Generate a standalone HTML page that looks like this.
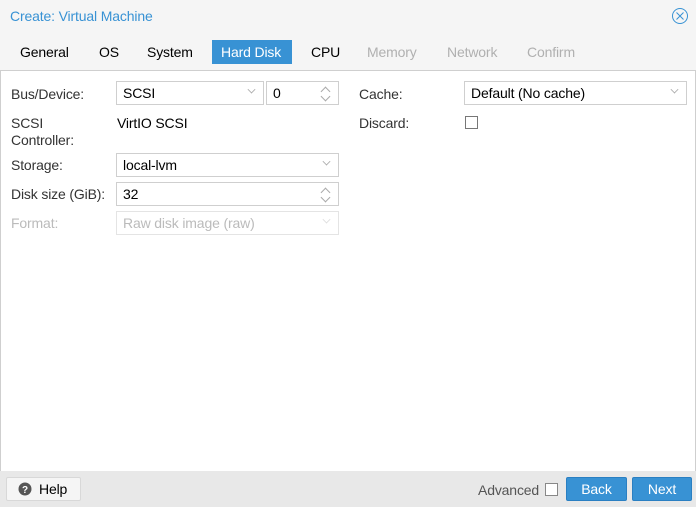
<!DOCTYPE html>
<html><head><style>
*{box-sizing:border-box;margin:0;padding:0}
body{width:696px;height:507px;background:#f5f5f5;font-family:"Liberation Sans",sans-serif;font-size:14px;color:#000;position:relative;overflow:hidden;letter-spacing:-0.15px}
.a{position:absolute;white-space:nowrap}
.title{left:10px;top:8px;color:#3892d4}
.tab{top:40px;height:24px;line-height:24px;padding:0 9px}
.dis{color:#b0b0b0}
.body{left:0;top:70px;width:696px;height:401px;background:#fff;border:1px solid #cfcfcf;border-bottom:none}
.lbl{color:#333}
.f{height:24px;border:1px solid #cfcfcf;background:#fff;line-height:22px;padding-left:6px}
.arr{position:absolute;right:8px;top:7px;width:7px;height:7px;border-right:1px solid #aaa;border-bottom:1px solid #aaa;transform:rotate(45deg) scale(.8);top:4px}
.spin:before,.spin:after{content:"";position:absolute;right:9px;width:6px;height:6px;border-left:1px solid #aaa;border-top:1px solid #aaa}
.spin:before{top:6px;transform:rotate(45deg)}
.spin:after{top:11px;transform:rotate(225deg)}
.cb{width:13px;height:13px;border:1px solid #777;background:#fff}
.foot{left:0;top:471px;width:696px;height:36px;background:#e8e8e8}
.btn{top:477px;height:24px;line-height:22px;border-radius:2px;text-align:center}
.blue{background:#3892d4;border:1px solid #2a7fc2;color:#fff}
</style></head><body>
<div class="a title">Create: Virtual Machine</div>
<svg class="a" style="left:671px;top:7px" width="18" height="18" viewBox="0 0 18 18"><circle cx="9" cy="9" r="7.5" fill="none" stroke="#3892d4" stroke-width="1"/><path d="M5.5 5.5L12.5 12.5M12.5 5.5L5.5 12.5" stroke="#3892d4" stroke-width="1"/></svg>
<div class="a tab" style="left:11px">General</div>
<div class="a tab" style="left:90px">OS</div>
<div class="a tab" style="left:138px">System</div>
<div class="a tab" style="left:212px;width:80px;background:#3892d4;color:#fff">Hard Disk</div>
<div class="a tab" style="left:302px">CPU</div>
<div class="a tab dis" style="left:358px">Memory</div>
<div class="a tab dis" style="left:438px">Network</div>
<div class="a tab dis" style="left:518px">Confirm</div>
<div class="a body"></div>
<div class="a lbl" style="left:11px;top:86px">Bus/Device:</div>
<div class="a f" style="left:116px;top:81px;width:148px">SCSI<span class="arr"></span></div>
<div class="a f spin" style="left:266px;top:81px;width:73px">0</div>
<div class="a lbl" style="left:11px;top:115px;line-height:17px">SCSI<br>Controller:</div>
<div class="a" style="left:117px;top:115px">VirtIO SCSI</div>
<div class="a lbl" style="left:11px;top:157px">Storage:</div>
<div class="a f" style="left:116px;top:153px;width:223px">local-lvm<span class="arr"></span></div>
<div class="a lbl" style="left:11px;top:186px">Disk size (GiB):</div>
<div class="a f spin" style="left:116px;top:182px;width:223px">32</div>
<div class="a dis" style="left:11px;top:215px;color:#bbb">Format:</div>
<div class="a f" style="left:116px;top:211px;width:223px;color:#bbb;border-color:#e4e4e4">Raw disk image (raw)<span class="arr" style="border-color:#ddd"></span></div>
<div class="a lbl" style="left:359px;top:86px">Cache:</div>
<div class="a f" style="left:464px;top:81px;width:223px">Default (No cache)<span class="arr"></span></div>
<div class="a lbl" style="left:359px;top:115px">Discard:</div>
<div class="a cb" style="left:465px;top:116px"></div>
<div class="a foot"></div>
<div class="a btn" style="left:6px;top:477px;width:75px;background:#f5f5f5;border:1px solid #d8d8d8;text-align:left;padding-left:32px">Help</div>
<svg class="a" style="left:18px;top:482px" width="14" height="14" viewBox="0 0 14 14"><circle cx="7" cy="7" r="6.5" fill="#555"/><text x="7" y="11" font-size="10" font-weight="bold" fill="#fff" text-anchor="middle" font-family="Liberation Sans">?</text></svg>
<div class="a" style="left:478px;top:482px;color:#555">Advanced</div>
<div class="a cb" style="left:545px;top:483px;border-color:#888"></div>
<div class="a btn blue" style="left:566px;width:61px">Back</div>
<div class="a btn blue" style="left:632px;width:60px">Next</div>
</body></html>
